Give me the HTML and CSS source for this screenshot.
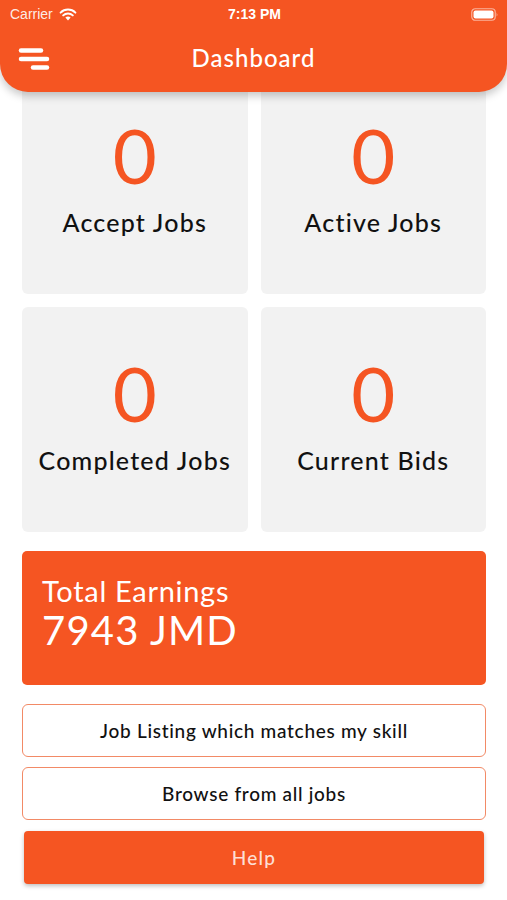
FILE: index.html
```html
<!DOCTYPE html>
<html lang="en">
<head>
    <meta charset="UTF-8">
    <title>Dashboard</title>
    <meta name="viewport" content="width=device-width, initial-scale=1.0">
    <link rel="stylesheet" href="styles.css">
</head>
<body>
    <header class="topbar">
        <div class="status">
            <div class="status_left">
                <span>Carrier</span>
                <svg class="wifi" width="18" height="13" viewBox="0 0 18 13">
                    <path d="M9 12.5 L6.4 9.6 A3.8 3.8 0 0 1 11.6 9.6 Z" fill="#fff"/>
                    <path d="M4.2 7.4 A6.9 6.9 0 0 1 13.8 7.4" stroke="#fff" stroke-width="2" fill="none" stroke-linecap="round"/>
                    <path d="M1.6 4.6 A10.6 10.6 0 0 1 16.4 4.6" stroke="#fff" stroke-width="2" fill="none" stroke-linecap="round"/>
                </svg>
            </div>
            <span class="status_time">7:13 PM</span>
            <div class="status_right">
                <svg width="28" height="13" viewBox="0 0 28 13">
                    <rect x="0.75" y="0.75" width="23.5" height="11.5" rx="3.5" fill="none" stroke="rgba(255,255,255,0.55)" stroke-width="1.2"/>
                    <rect x="2.5" y="2.5" width="20" height="8" rx="2" fill="#fff"/>
                    <path d="M25.6 4.4 Q27.2 6.5 25.6 8.6 Z" fill="rgba(255,255,255,0.55)"/>
                </svg>
            </div>
        </div>
        <nav class="navbar">
            <span class="menu_btn">
                <svg width="32" height="26" viewBox="0 0 32 26">
                    <g stroke="#fff" stroke-width="4.5" stroke-linecap="round">
                        <line x1="3" y1="3.5" x2="23" y2="3.5"/>
                        <line x1="3" y1="12" x2="29" y2="12"/>
                        <line x1="15" y1="20.5" x2="29" y2="20.5"/>
                    </g>
                </svg>
            </span>
            <h1>Dashboard</h1>
        </nav>
    </header>

    <main class="content">
        <section class="stats">
            <div class="stat_card">
                <span class="stat_value">0</span>
                <span class="stat_label">Accept Jobs</span>
            </div>
            <div class="stat_card">
                <span class="stat_value">0</span>
                <span class="stat_label">Active Jobs</span>
            </div>
            <div class="stat_card">
                <span class="stat_value">0</span>
                <span class="stat_label">Completed Jobs</span>
            </div>
            <div class="stat_card">
                <span class="stat_value">0</span>
                <span class="stat_label">Current Bids</span>
            </div>
        </section>

        <section class="earnings">
            <span class="earnings_title">Total Earnings</span>
            <span class="earnings_amount">7943 JMD</span>
        </section>

        <div class="actions">
            <button class="btn btn_outline">Job Listing which matches my skill</button>
            <button class="btn btn_outline">Browse from all jobs</button>
            <button class="btn btn_solid">Help</button>
        </div>
    </main>
</body>
</html>
```

FILE: styles.css
```css
:root {
    --orange: #f55522;
    --orange-light: #f28a66;
    --card: #f2f2f2;
    --text: #111;
}
* {
    box-sizing: border-box;
    padding: 0;
    margin: 0;
}
body {
    font-family: "Lato", "Noto Sans", sans-serif;
    background: #fff;
    color: var(--text);
}

/* Header */
.topbar {
    position: relative;
    z-index: 2;
    background: var(--orange);
    color: #fff;
    border-radius: 0 0 28px 28px;
    box-shadow: 0 4px 8px rgba(0, 0, 0, 0.22);
}
.status {
    height: 28px;
    display: flex;
    align-items: center;
    justify-content: space-between;
    padding: 0 8px 0 10px;
    font-size: 14px;
}
.status_left {
    display: flex;
    align-items: center;
    gap: 6px;
    width: 100px;
    font-family: "Liberation Sans", sans-serif;
    color: rgba(255, 255, 255, 0.9);
}
.status_time {
    font-family: "Liberation Sans", sans-serif;
    font-weight: 700;
    font-size: 14px;
}
.status_right {
    width: 100px;
    display: flex;
    justify-content: flex-end;
}
.navbar {
    height: 64px;
    display: flex;
    align-items: center;
    position: relative;
    padding-left: 18px;
}
.menu_btn {
    display: flex;
}
.navbar h1 {
    flex: 1;
    text-align: center;
    font-size: 24px;
    font-weight: 500;
    letter-spacing: 1px;
    margin-right: 50px;
    margin-top: -6px;
}

/* Content */
.content {
    margin-top: -23px;
    padding: 0 21px 20px 22px;
}
.stats {
    display: grid;
    grid-template-columns: 1fr 1fr;
    gap: 13px;
}
.stat_card {
    height: 225px;
    background: var(--card);
    border-radius: 6px;
    display: flex;
    flex-direction: column;
    align-items: center;
    justify-content: center;
    padding-bottom: 15px;
}
.stat_value {
    font-size: 76px;
    line-height: 86px;
    color: var(--orange);
    font-weight: 400;
}
.stat_label {
    font-size: 25px;
    font-weight: 500;
    line-height: 30px;
    letter-spacing: 1.2px;
    margin-top: 9px;
}

/* Earnings */
.earnings {
    margin-top: 19px;
    height: 134px;
    background: var(--orange);
    border-radius: 5px;
    color: #fff;
    display: flex;
    flex-direction: column;
    justify-content: center;
    padding: 0 20px 10px;
}
.earnings_title {
    font-size: 29px;
    line-height: 34px;
    letter-spacing: 0.7px;
}
.earnings_amount {
    font-size: 40px;
    line-height: 44px;
    letter-spacing: 1.2px;
}

/* Buttons */
.actions {
    margin-top: 19px;
    display: flex;
    flex-direction: column;
    gap: 10px;
}
.btn {
    height: 53px;
    font-family: inherit;
    font-size: 19px;
    font-weight: 500;
    letter-spacing: 0.7px;
    border-radius: 6px;
    cursor: pointer;
}
.btn_outline {
    background: #fff;
    color: var(--text);
    border: 1.5px solid var(--orange-light);
}
.btn_solid {
    margin: 1px 2px 0;
    background: var(--orange);
    color: rgba(255, 255, 255, 0.82);
    letter-spacing: 1.2px;
    border: none;
    border-radius: 4px;
    box-shadow: 0 2px 4px rgba(0, 0, 0, 0.25);
}
```
